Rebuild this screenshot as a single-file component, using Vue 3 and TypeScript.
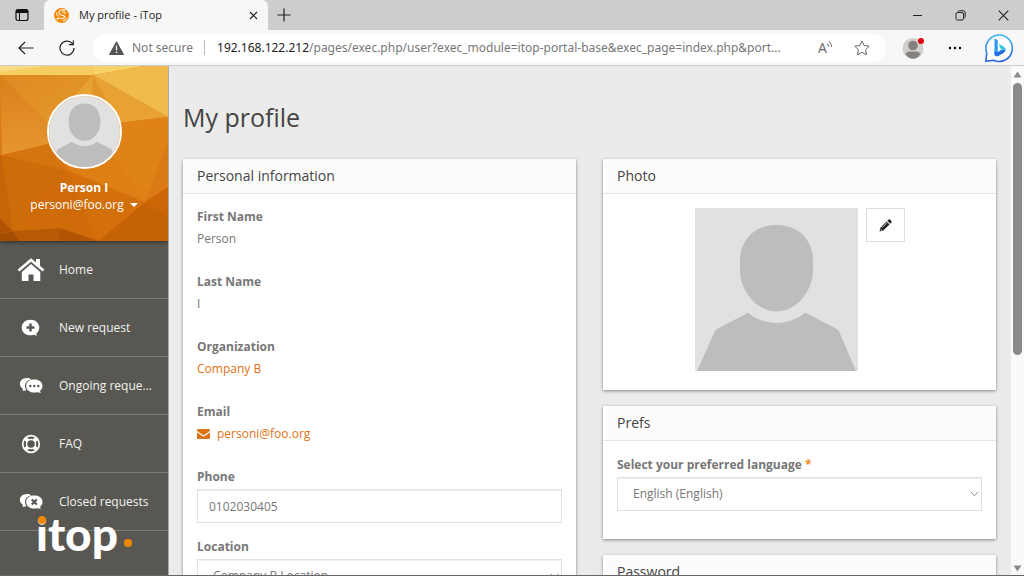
<script setup lang="ts">
import { ref } from 'vue'

interface NavItem { label: string; icon: 'home' | 'new' | 'ongoing' | 'faq' | 'closed' }
interface Facet { points: string; fill: string }

const navItems: NavItem[] = [
  { label: 'Home', icon: 'home' },
  { label: 'New request', icon: 'new' },
  { label: 'Ongoing reque...', icon: 'ongoing' },
  { label: 'FAQ', icon: 'faq' },
  { label: 'Closed requests', icon: 'closed' },
]

const facets: Facet[] = [
  { points: '0,0 91,0 93,9 0,9', fill: '#f6cd60' },
  { points: '0,0 45,0 0,6', fill: '#f9dc84' },
  { points: '91,0 145,0 93,9', fill: '#f8d468' },
  { points: '145,0 168,0 168,51 93,9', fill: '#f0bb4c' },
  { points: '0,9 93,9 48,58', fill: 'url(#facet-a)' },
  { points: '93,9 168,51 118,57 100,60 60,60 48,58', fill: '#e8a233' },
  { points: '93,9 118,57 90,50', fill: '#e2942a' },
  { points: '0,9 48,58 48,78 2,89', fill: 'url(#facet-b)' },
  { points: '0,45 2,89 0,89', fill: '#d87a14' },
  { points: '48,58 118,57 168,55 168,75 145,136 69,105 48,78', fill: '#de7f16' },
  { points: '118,57 168,55 168,75 145,136 116,92', fill: '#df8218' },
  { points: '168,51 168,55 118,57', fill: '#df8218' },
  { points: '168,75 168,121 145,136', fill: '#db7a13' },
  { points: '2,89 48,78 69,105', fill: '#d67410' },
  { points: '2,89 69,105 13,165', fill: '#cf6c0a' },
  { points: '0,89 2,89 13,165 0,152', fill: '#c76407' },
  { points: '69,105 13,165 60,162 98,175', fill: '#d06b09' },
  { points: '69,105 145,136 98,175', fill: '#d4700c' },
  { points: '145,136 168,121 168,150', fill: '#cb6606' },
  { points: '145,136 168,150 168,175 98,175', fill: '#c66206' },
  { points: '0,152 13,165 0,168', fill: '#b05404' },
  { points: '0,168 13,165 20,175 0,175', fill: '#a54d03' },
  { points: '13,165 60,162 57,175 20,175', fill: '#b85a05' },
  { points: '60,162 98,175 57,175', fill: '#b15404' },
]

const phone = ref<string>('0102030405')
const location = ref<string>('Company B Location')
const language = ref<string>('English (English)')
</script>

<template>
  <div class="window">
    <header class="titlebar">
      <button class="plain tab-actions" aria-label="Tab actions">
        <svg width="14" height="14" viewBox="0 0 14 14"><rect x="1" y="1.500" width="12" height="11" rx="2" fill="none" stroke="#111" stroke-width="1.200" /><path d="M1 3.500C1 2 2 1.300 3 1.300h8c1 0 2 .7 2 2.200V5H1z" fill="#111" /><path d="M4.500 5v7.500" stroke="#111" /></svg>
      </button>
      <div class="tab">
        <svg width="15" height="15" viewBox="0 0 15 15"><circle cx="7.500" cy="7.500" r="7.500" fill="#f18a0c" /><path d="M11.500 2.800C9 1 5 2 5 4.500s3 2.700 5 3.500-1 3.500-3 2.500-4-.5-4 1.500M3 4.500c-1 1.500 0 3 1.500 3.500M8 4.300c1.500-.8 3 .3 3.500 1.500M9 12.500c2 .5 3-1 3.500-2.500" fill="none" stroke="#fff4e0" stroke-width="1.100" /></svg>
        <span class="tab-title">My profile - iTop</span>
        <button class="plain" aria-label="Close tab">
          <svg width="9" height="9" viewBox="0 0 9 9"><path d="M1 1l7 7M8 1L1 8" stroke="#222" stroke-width="1.200" /></svg>
        </button>
      </div>
      <button class="plain new-tab" aria-label="New tab">
        <svg width="14" height="14" viewBox="0 0 14 14"><path d="M7 .5v13M.5 7h13" stroke="#222" stroke-width="1.200" /></svg>
      </button>
      <div class="window-controls">
        <button class="plain" aria-label="Minimize"><svg width="11" height="11" viewBox="0 0 11 11"><path d="M1 5.500h9" stroke="#222" /></svg></button>
        <button class="plain" aria-label="Restore"><svg width="11" height="11" viewBox="0 0 11 11"><rect x="1" y="2.500" width="7.500" height="7.500" rx="1.500" fill="none" stroke="#222" /><path d="M3 1.500Q3.300.7 4.500.7H8Q10.200.7 10.200 3v3.500Q10.200 7.800 9.500 8" fill="none" stroke="#222" /></svg></button>
        <button class="plain" aria-label="Close"><svg width="11" height="11" viewBox="0 0 11 11"><path d="M.7.7l9.600 9.600M10.300.7L.7 10.300" stroke="#222" stroke-width="1.100" /></svg></button>
      </div>
    </header>

    <div class="toolbar">
      <button class="plain tool" aria-label="Back"><svg width="16" height="14" viewBox="0 0 16 14"><path d="M15.500 7H1.200M7 1L1 7l6 6" fill="none" stroke="#222" stroke-width="1.200" /></svg></button>
      <button class="plain tool" aria-label="Refresh"><svg width="16" height="16" viewBox="0 0 16 16"><path d="M15 8A7 7 0 1 1 13.500 3.700M14.300.5v4.200H10" fill="none" stroke="#222" stroke-width="1.200" /></svg></button>
      <div class="address">
        <svg width="15" height="14" viewBox="0 0 15 14"><path d="M7.500.8L14.500 13.500H.5z" fill="#555" stroke="#555" stroke-linejoin="round" /><path d="M7.500 4.500v4.700M7.500 10.500V12" stroke="#fff" stroke-width="1.300" /></svg>
        <span class="secure">Not secure</span>
        <span class="url"><span class="host">192.168.122.212</span>/pages/exec.php/user?exec_module=itop-portal-base&amp;exec_page=index.php&amp;port...</span>
        <button class="plain read" aria-label="Read aloud"><svg width="16" height="15" viewBox="0 0 16 15"><text x="0" y="13" class="read-letter">A</text><path d="M9 3.500q1.500 1.200 1.700 3.200M10.800 1.200q2.700 2.300 2.800 5.800" fill="none" stroke="#666" /></svg></button>
        <button class="plain" aria-label="Add to favorites"><svg width="16" height="16" viewBox="0 0 16 16"><path d="M8 .9l2.200 4.600 5 .7-3.600 3.500.9 5L8 12.300l-4.500 2.400.9-5L.8 6.200l5-.7z" fill="none" stroke="#666" stroke-linejoin="round" /></svg></button>
      </div>
      <button class="plain account" aria-label="Profile"><svg width="22" height="22" viewBox="0 0 22 22"><circle cx="11" cy="11.500" r="10.500" fill="#d2cfcb" /><circle cx="11" cy="8.500" r="4.800" fill="#85817e" /><path d="M3.500 17q1-2.500 4-2.500h7q3 0 4 2.500-3 4.700-7.500 4.700T3.500 17" fill="#85817e" /><circle cx="19" cy="4" r="3" fill="#e3000f" /></svg></button>
      <button class="plain more" aria-label="Settings and more"><svg width="14" height="4" viewBox="0 0 14 4"><circle cx="2" cy="2" r="1.200" /><circle cx="7" cy="2" r="1.200" /><circle cx="12" cy="2" r="1.200" /></svg></button>
      <button class="plain" aria-label="Bing">
        <svg width="30" height="30" viewBox="0 0 30 30">
          <defs><linearGradient id="ring" x1="0" y1="0" x2="0" y2="1"><stop stop-color="#3bb8ef" /><stop offset="1" stop-color="#2b5fdc" /></linearGradient></defs>
          <path d="M1.800 28.300L2.800 20A13.200 13.200 0 1 1 9.500 27.200z" fill="#fff" stroke="url(#ring)" stroke-width="1.600" stroke-linejoin="round" />
          <path d="M10.500 5.500l3.200 1.500v12l-3.200 2.500z" fill="#2a9af0" /><path d="M10.500 18.500l3.200.5 7.300-4.300q1.300 3.300-1.500 5.300L14 23.300q-3.500.5-3.500-2.500z" fill="#2172e4" /><path d="M14.800 11l4 2q2.700 1.300 2.500 4.500l-5-2z" fill="#35c9e8" />
        </svg>
      </button>
    </div>

    <div class="viewport">
      <aside class="sidebar">
        <section class="user">
          <svg class="facets" viewBox="0 0 168 175" preserveAspectRatio="none" aria-hidden="true">
            <defs>
              <linearGradient id="facet-a" x1="0" y1="0" x2="1" y2="1"><stop stop-color="#dd8a22" /><stop offset="1" stop-color="#e59a2c" /></linearGradient>
              <linearGradient id="facet-b" x1="0" y1="0" x2="0" y2="1"><stop stop-color="#da8019" /><stop offset="1" stop-color="#e6962f" /></linearGradient>
            </defs>
            <rect width="168" height="175" fill="#dc7c15" />
            <polygon v-for="(f, i) in facets" :key="i" :points="f.points" :fill="f.fill" />
          </svg>
          <svg class="avatar" viewBox="0 0 163 163" role="img" aria-label="User photo"><rect width="163" height="163" fill="#e1e1e1" /><path d="M81.500 17C104 17 118 32 118 61 118 85 101 103 81.500 103S45 85 45 61C45 32 59 17 81.500 17z" fill="#bdbdbd" /><path d="M2 163L20 122 53 105Q66 115 81.500 115T110 105L143 122 161 163z" fill="#bdbdbd" /></svg>
          <strong class="user-name">Person I</strong>
          <button class="plain user-mail">personi@foo.org <span class="caret"></span></button>
        </section>
        <nav class="nav">
          <a v-for="item in navItems" :key="item.label" href="#" class="nav-item">
            <span class="nav-icon">
              <svg v-if="item.icon === 'home'" width="28" height="24" viewBox="0 0 28 24"><path d="M1.500 12.500L14 2l12.500 10.500" fill="none" stroke="#fff" stroke-width="2.800" /><path d="M19 1h4v8l-4-3.300zM14 6l9.300 7.900V23H16.500v-6.500h-5V23H4.800V13.900z" fill="#fff" /></svg>
              <svg v-else-if="item.icon === 'new'" width="20" height="18" viewBox="0 0 20 18"><path d="M9.500.8C14.700.8 18.300 4.200 18.300 8.500c0 2.700-1.300 4.700-3.200 6l1 2.200-3.500-1c-6 2-11.900-1.400-11.900-7.200C.7 4.200 4.300.8 9.500.8z" fill="#fff" /><path d="M9.500 4.500v8M5.500 8.500h8" stroke="#585751" stroke-width="2.400" /></svg>
              <svg v-else-if="item.icon === 'faq'" width="20" height="20" viewBox="0 0 20 20"><circle cx="10" cy="10" r="8.300" fill="none" stroke="#fff" stroke-width="1.700" /><circle cx="10" cy="10" r="4.500" fill="none" stroke="#fff" stroke-width="1.500" /><path d="M4 4l3 3M16 4l-3 3M4 16l3-3M16 16l-3-3" stroke="#fff" stroke-width="4" /></svg>
              <svg v-else width="24" height="18" viewBox="0 0 24 18">
                <path d="M8 1c2 0 3.500.6 4.700 1.500C6 3 4.500 9.500 7.500 13.200L3.500 14l.5-2C-1.500 8.500.5 1 8 1z" fill="#fff" />
                <path d="M15.300 2.600c5 0 8.200 2.600 8.200 6.400 0 2-.9 3.700-2.500 4.800l.8 2.200-3-.8C12.500 16.700 7.200 14 7.200 9c0-3.800 3.300-6.400 8.100-6.400z" fill="#fff" />
                <g v-if="item.icon === 'ongoing'" fill="#585751"><circle cx="11.300" cy="9" r="1.200" /><circle cx="15.300" cy="9" r="1.200" /><circle cx="19.300" cy="9" r="1.200" /></g>
                <path v-else d="M12.800 6.500l5 5M17.800 6.500l-5 5" stroke="#585751" stroke-width="2.200" />
              </svg>
            </span>
            <span class="nav-label">{{ item.label }}</span>
          </a>
        </nav>
        <svg class="brand" width="96" height="52" viewBox="0 0 96 52" role="img" aria-label="itop"><text x="0" y="37" class="brand-text">itop</text><circle cx="6" cy="6" r="4" fill="#f18a00" /><circle cx="92" cy="29" r="4" fill="#f18a00" /></svg>
      </aside>

      <main class="content">
        <h1>My profile</h1>
        <div class="columns">
          <section class="card">
            <h2>Personal information</h2>
            <form class="fields" @submit.prevent>
              <div class="field"><span class="label">First Name</span><span class="value">Person</span></div>
              <div class="field"><span class="label">Last Name</span><span class="value">I</span></div>
              <div class="field"><span class="label">Organization</span><a href="#" class="value">Company B</a></div>
              <div class="field"><span class="label">Email</span>
                <a href="#" class="value mail"><svg width="13" height="10" viewBox="0 0 13 10"><path d="M1 0h11q1 0 1 1v.8Q10 4.500 6.500 6.200 3 4.500 0 1.800V1q0-1 1-1zM0 3.200Q3 5.800 6.500 7.400 10 5.800 13 3.200V9q0 1-1 1H1q-1 0-1-1z" fill="#dc7213" /></svg>personi@foo.org</a>
              </div>
              <div class="field edit"><label class="label" for="phone">Phone</label><input id="phone" v-model="phone" type="text" class="control" /></div>
              <div class="field edit"><label class="label" for="location">Location</label>
                <div class="select-wrap"><select id="location" v-model="location" class="control"><option>Company B Location</option></select><svg class="chevron" width="9" height="6" viewBox="0 0 9 6"><path d="M.5.700l4 4 4-4" fill="none" stroke="#888" /></svg></div>
              </div>
            </form>
          </section>

          <div class="stack">
            <section class="card">
              <h2>Photo</h2>
              <div class="photo-row">
                <svg class="photo" viewBox="0 0 163 163" role="img" aria-label="Photo"><rect width="163" height="163" fill="#e1e1e1" /><path d="M81.500 17C104 17 118 32 118 53V64C117 84 101 103.500 81.500 103.500S46 84 45 64V53C45 32 59 17 81.500 17z" fill="#bdbdbd" /><path d="M2 163L20 123Q21 121.500 23 120.500L53 104.700Q66 115 81.500 115T110.500 104.700L141 120.500Q143 121.500 144 123L161 163z" fill="#bdbdbd" /></svg>
                <button class="edit-photo" aria-label="Edit photo"><svg width="13" height="13" viewBox="0 0 13 13"><path d="M9.300.8q1-.9 2 0l.9.900q.9 1 0 2l-1 1L8.300 1.800zM7.600 2.500l2.900 2.900-6.200 6.200L.5 12.500l.9-3.800z" fill="#222" /><path d="M3.200 8.500l5-4.800" stroke="#fff" stroke-width=".7" /><path d="M1.800 9.800l1.400 1.400-1.500.4z" fill="#fff" /></svg></button>
              </div>
            </section>
            <section class="card">
              <h2>Prefs</h2>
              <form class="fields prefs" @submit.prevent>
                <label class="label" for="language">Select your preferred language <span class="required">*</span></label>
                <div class="select-wrap"><select id="language" v-model="language" class="control"><option>English (English)</option></select><svg class="chevron" width="9" height="6" viewBox="0 0 9 6"><path d="M.5.700l4 4 4-4" fill="none" stroke="#888" /></svg></div>
              </form>
            </section>
            <section class="card"><h2>Password</h2></section>
          </div>
        </div>
      </main>
      <div class="scrollbar" aria-hidden="true">
        <svg width="9" height="7" viewBox="0 0 9 7"><path d="M4.500.5L8.500 6.500h-8z" fill="#8a8a8a" /></svg>
        <div class="track"><div class="thumb"></div></div>
        <svg width="9" height="7" viewBox="0 0 9 7"><path d="M4.500 6.500L8.500.5h-8z" fill="#8a8a8a" /></svg>
      </div>
    </div>
  </div>
</template>

<style>
body { margin: 0; overflow: hidden; }
</style>

<style scoped>
.window { display: flex; flex-direction: column; height: 100vh; box-sizing: border-box; border-bottom: 1px solid #666; overflow: hidden; font: 12px/18px "Open Sans", "Noto Sans", sans-serif; color: #777; background: #ebebeb; }
.window * { box-sizing: border-box; }
svg { display: block; flex: none; }
.plain { display: flex; align-items: center; justify-content: center; padding: 0; border: 0; background: none; font: inherit; color: inherit; }
a { color: #dc7213; text-decoration: none; }

.titlebar { display: flex; flex: none; height: 30px; background: #cdcdcd; }
.tab-actions { width: 44px; }
.tab { display: flex; align-items: center; gap: 10px; width: 224px; padding: 0 10px; border-radius: 6px 6px 0 0; background: #f7f7f7; color: #222; font-size: 11px; }
.tab-title { flex: 1; }
.new-tab { width: 32px; }
.window-controls { display: flex; gap: 32px; margin-left: auto; padding-right: 15px; }

.toolbar { display: flex; flex: none; align-items: center; height: 36px; padding: 0 10px 0 16px; background: #f7f7f7; border-bottom: 1px solid #ccc; font-family: "Noto Sans", sans-serif; }
.tool { width: 20px; margin-right: 21px; }
.tool + .tool { margin-right: 16px; }
.address { display: flex; flex: 1; align-items: center; min-width: 0; height: 28px; padding: 0 16px; border-radius: 14px; background: #fff; }
.secure { flex: none; margin: 0 12px 0 8px; padding-right: 11px; border-right: 1px solid #bbb; line-height: 15px; }
.url { flex: 1; overflow: hidden; white-space: nowrap; text-overflow: ellipsis; }
.host { color: #222; }
.read { margin: 0 20px 0 14px; }
.read-letter { font: 14px "Open Sans", sans-serif; fill: #666; }
.account { margin-left: 16px; }
.more { margin: 0 22px 0 24px; }

.viewport { display: flex; flex: 1; min-height: 0; }
.sidebar { position: relative; flex: none; width: 169px; overflow: hidden; background: #585751; border-right: 1px solid #aaa; }
.user { position: relative; display: flex; flex-direction: column; align-items: center; height: 175px; padding-top: 28px; color: #fff; box-shadow: 0 1px 4px rgba(0, 0, 0, .5); }
.facets { position: absolute; inset: 0; width: 100%; height: 100%; }
.avatar { position: relative; width: 75px; height: 75px; border: 2px solid #fff; border-radius: 50%; }
.user-name { position: relative; margin-top: 10px; line-height: 17px; }
.user-mail { position: relative; gap: 6px; }
.caret { border: 4px solid transparent; border-top-color: #fff; border-bottom: 0; }
.nav-item { display: flex; align-items: center; height: 58px; border-bottom: 1px solid #7d7c78; color: #f2f2f2; }
.nav-icon { display: flex; justify-content: center; width: 62px; }
.nav-label { flex: 1; min-width: 0; margin: 0 10px 0 -3px; white-space: nowrap; }
.brand { position: absolute; left: 36px; bottom: 9px; }
.brand-text { font: 900 46px Lato, sans-serif; fill: #fff; }

.content { flex: 1; min-width: 0; padding: 0 15px 0 14px; overflow: hidden; }
h1 { margin: 33px 0 23px; font-size: 25px; line-height: 37px; font-weight: 400; color: #444; }
.columns { display: grid; grid-template-columns: 1fr 1fr; gap: 27px; }
.stack { display: flex; flex-direction: column; gap: 16px; }
.card { background: #fff; box-shadow: 0 1px 3px rgba(0, 0, 0, .45); }
h2 { margin: 0; padding: 0 14px; border-bottom: 1px solid #e5e5e5; background: #fcfcfc; font-size: 14px; line-height: 34px; font-weight: 400; color: #444; }
.fields { padding: 12px 14px; }
.prefs { padding: 13px 14px 28px; }
.field { margin-bottom: 21px; }
.edit { margin-bottom: 13px; }
.label, .value { display: block; line-height: 22px; }
.label { font-weight: 700; }
.mail { display: flex; align-items: center; gap: 7px; }
.control { display: block; width: 100%; height: 34px; margin-top: 1px; padding: 0 11px; border: 1px solid #e1e1e1; border-radius: 0; background: #fff; box-shadow: inset 0 1px 1px rgba(0, 0, 0, .07); font: inherit; color: #777; appearance: none; }
.select-wrap { position: relative; }
select.control { padding: 0 15px; }
.chevron { position: absolute; top: 14px; right: 3px; pointer-events: none; }
.required { color: #f18a22; }
.photo-row { display: flex; justify-content: center; gap: 8px; padding: 14px 14px 19px; }
.photo { width: 163px; height: 163px; }
.edit-photo { display: flex; align-items: center; justify-content: center; width: 39px; height: 34px; padding: 0; border: 1px solid #ddd; background: #fff; }

.scrollbar { display: flex; flex: none; flex-direction: column; align-items: center; width: 13px; padding: 5px 0 3px; background: #fafafa; }
.track { flex: 1; width: 9px; padding: 5px 0; }
.thumb { width: 9px; height: 57%; border-radius: 5px; background: #8a8a8a; }
</style>
